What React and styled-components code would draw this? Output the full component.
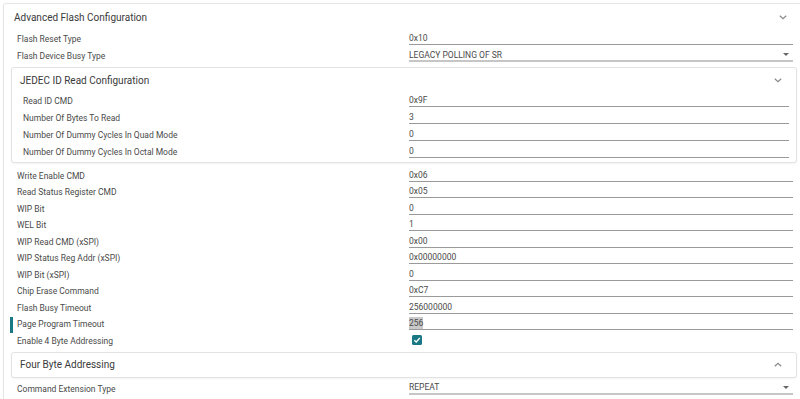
import React from "react";
import styled, { createGlobalStyle, css } from "styled-components";

const GlobalStyle = createGlobalStyle`
  html, body {
    margin: 0;
    padding: 0;
    background: #fff;
    overflow: hidden;
  }
  body {
    font-family: Roboto, "Liberation Sans", Arial, sans-serif;
    color: #444;
  }
`;

const Page = styled.div`
  width: 800px;
  height: 399px;
  overflow: hidden;
  padding: 3px 0 0 3px;
  box-sizing: border-box;
`;

const Card = styled.div`
  width: 800px;
  box-sizing: border-box;
  border: 1px solid #e6e6e6;
  border-radius: 3px;
  box-shadow: 0 1px 2px rgba(0, 0, 0, 0.06);
  background: #fff;
  padding: 0 5px 20px 7px;
`;

const InnerCard = styled.div`
  box-sizing: border-box;
  border: 1px solid #e3e3e3;
  border-radius: 3px;
  box-shadow: 0 1px 2px rgba(0, 0, 0, 0.05);
  background: #fff;
  margin: ${(p) => p.$margin || "0"};
  padding: 0 7px ${(p) => (p.$collapsed ? "0" : "2px")} 0;
`;

const Header = styled.div`
  display: flex;
  align-items: center;
  justify-content: space-between;
  height: ${(p) => p.$height}px;
  padding-left: ${(p) => p.$left}px;
  padding-right: ${(p) => p.$right}px;
  font-size: 10px;
  color: #3a3a3a;
`;

const Chevron = styled.svg`
  width: 8px;
  height: 5px;
  display: block;
`;

const Row = styled.div`
  position: relative;
  display: grid;
  grid-template-columns: ${(p) => p.$label}px 1fr;
  align-items: end;
  height: ${(p) => p.$height}px;
  padding-left: ${(p) => p.$left}px;
  padding-right: ${(p) => p.$right}px;

  ${(p) =>
    p.$active &&
    css`
      &::before {
        content: "";
        position: absolute;
        left: -1px;
        top: 1px;
        width: 3px;
        height: 16px;
        background: #1a7884;
      }
    `}
`;

const Label = styled.div`
  align-self: center;
  padding-top: 1px;
  font-size: 8.5px;
  color: #4a4a4a;
  white-space: nowrap;
`;

const Field = styled.div`
  display: flex;
  align-items: center;
  justify-content: space-between;
  box-sizing: border-box;
  height: 13px;
  margin-bottom: 2px;
  font-size: 8.5px;
  color: #4a4a4a;
  border-bottom: ${(p) => (p.$select ? "2px solid #c6c6c6" : "1px solid #9a9a9a")};
  white-space: nowrap;
`;

const Selected = styled.span`
  background: #c9c9c9;
  padding: 1px 0;
`;

const CheckField = styled.div`
  display: flex;
  align-items: center;
  height: 100%;
  padding-left: 3px;
`;

const CheckBox = styled.span`
  display: flex;
  align-items: center;
  justify-content: center;
  width: 10px;
  height: 10px;
  border-radius: 1.5px;
  background: #1a7884;
`;

const Caret = styled.span`
  width: 0;
  height: 0;
  margin-right: 4px;
  border-left: 3.5px solid transparent;
  border-right: 3.5px solid transparent;
  border-top: 3.5px solid #666;
`;

const ChevronDown = () => (
  <Chevron viewBox="0 0 8 5">
    <polyline points="0.8,0.8 4,3.8 7.2,0.8" fill="none" stroke="#8a8a8a" strokeWidth="1.2" />
  </Chevron>
);

const ChevronUp = () => (
  <Chevron viewBox="0 0 8 5">
    <polyline points="0.8,4.2 4,1.2 7.2,4.2" fill="none" stroke="#8a8a8a" strokeWidth="1.2" />
  </Chevron>
);

const outerRow = { $label: 392, $left: 6, $right: 4 };
const innerRow = { $label: 386, $left: 11, $right: 0, $height: 17 };

const jedecRows = [
  ["Read ID CMD", "0x9F"],
  ["Number Of Bytes To Read", "3"],
  ["Number Of Dummy Cycles In Quad Mode", "0"],
  ["Number Of Dummy Cycles In Octal Mode", "0"],
];

const flashRows = [
  ["Write Enable CMD", "0x06"],
  ["Read Status Register CMD", "0x05"],
  ["WIP Bit", "0"],
  ["WEL Bit", "1"],
  ["WIP Read CMD (xSPI)", "0x00"],
  ["WIP Status Reg Addr (xSPI)", "0x00000000"],
  ["WIP Bit (xSPI)", "0"],
  ["Chip Erase Command", "0xC7"],
  ["Flash Busy Timeout", "256000000"],
];

export default function App() {
  return (
    <>
      <GlobalStyle />
      <Page>
        <Card>
          <Header $height={26} $left={3} $right={10}>
            <span>Advanced Flash Configuration</span>
            <ChevronDown />
          </Header>

          <Row {...outerRow} $height={17}>
            <Label>Flash Reset Type</Label>
            <Field>0x10</Field>
          </Row>
          <Row {...outerRow} $height={17}>
            <Label>Flash Device Busy Type</Label>
            <Field $select>
              LEGACY POLLING OF SR
              <Caret />
            </Field>
          </Row>

          <InnerCard $margin="3px 0 4px 0">
            <Header $height={24} $left={8} $right={7}>
              <span>JEDEC ID Read Configuration</span>
              <ChevronDown />
            </Header>
            {jedecRows.map(([label, value]) => (
              <Row key={label} {...innerRow}>
                <Label>{label}</Label>
                <Field>{value}</Field>
              </Row>
            ))}
          </InnerCard>

          {flashRows.map(([label, value]) => (
            <Row key={label} {...outerRow} $height={16.5}>
              <Label>{label}</Label>
              <Field>{value}</Field>
            </Row>
          ))}
          <Row {...outerRow} $height={16.5} $active>
            <Label>Page Program Timeout</Label>
            <Field>
              <Selected>256</Selected>
            </Field>
          </Row>
          <Row {...outerRow} $height={16.5}>
            <Label>Enable 4 Byte Addressing</Label>
            <CheckField>
              <CheckBox>
                <svg width="8" height="8" viewBox="0 0 8 8">
                  <polyline points="1.3,4.2 3.2,6 6.8,2" fill="none" stroke="#fff" strokeWidth="1.3" />
                </svg>
              </CheckBox>
            </CheckField>
          </Row>

          <InnerCard $margin="3px 0 2px 0" $collapsed>
            <Header $height={24} $left={8} $right={7}>
              <span>Four Byte Addressing</span>
              <ChevronUp />
            </Header>
          </InnerCard>

          <Row {...outerRow} $height={17}>
            <Label>Command Extension Type</Label>
            <Field $select>
              REPEAT
              <Caret />
            </Field>
          </Row>
        </Card>
      </Page>
    </>
  );
}
